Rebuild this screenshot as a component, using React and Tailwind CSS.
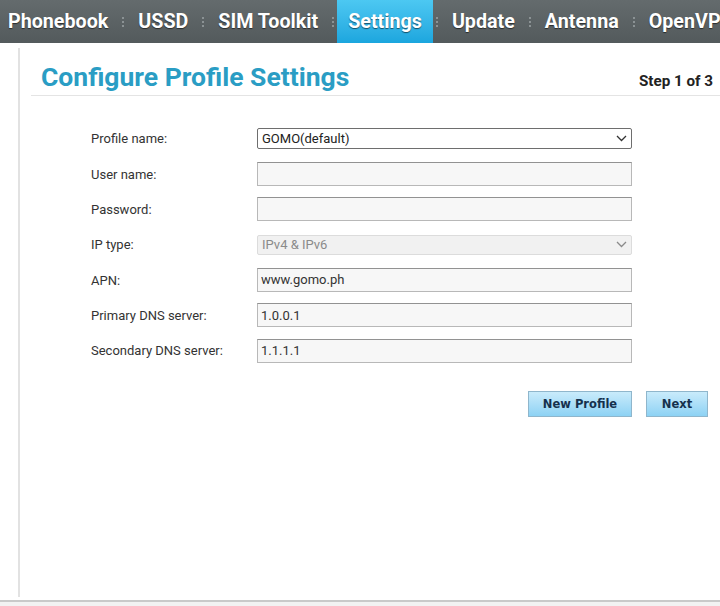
import React from "react";

const tabs = ["Phonebook", "USSD", "SIM Toolkit", "Settings", "Update", "Antenna", "OpenVPN"];

const Chevron = ({ color = "#333" }) => (
  <svg width="11" height="7" viewBox="0 0 11 7" className="shrink-0">
    <path d="M1 1l4.5 4.5L10 1" fill="none" stroke={color} strokeWidth="1.3" />
  </svg>
);

const Separator = () => (
  <div className="w-[8px] flex justify-center shrink-0">
    <div className="w-[2px] h-[10px] border-l-2 border-dotted border-[#8b9294]" />
  </div>
);

const TextField = ({ value }) => (
  <input
    readOnly
    value={value}
    className="w-[375px] h-[24px] bg-[#f7f7f7] border border-[#b8b8b8] border-t-[#929292] pl-[3px] text-[13px] text-[#333] outline-none"
  />
);

const rows = [
  { label: "Profile name:", kind: "select", value: "GOMO(default)" },
  { label: "User name:", kind: "input", value: "" },
  { label: "Password:", kind: "input", value: "" },
  { label: "IP type:", kind: "disabled", value: "IPv4 & IPv6" },
  { label: "APN:", kind: "input", value: "www.gomo.ph" },
  { label: "Primary DNS server:", kind: "input", value: "1.0.0.1" },
  { label: "Secondary DNS server:", kind: "input", value: "1.1.1.1" },
];

export default function App() {
  return (
    <div className="w-[720px] h-[606px] overflow-hidden bg-white font-['Roboto',sans-serif] flex flex-col">
      {/* Top tab bar */}
      <div className="h-[43px] shrink-0 flex items-stretch bg-gradient-to-b from-[#646b6d] to-[#535a5c] whitespace-nowrap">
        {tabs.map((tab, i) => (
          <React.Fragment key={tab}>
            {i > 0 && <div className="flex items-center"><Separator /></div>}
            <div
              className={
                "flex items-center text-[19.7px] font-bold text-white [text-shadow:0_1px_1px_rgba(0,0,0,0.55)] " +
                (i === 0 ? "pl-[8px] pr-[11px] " : "px-[11px] ") +
                (tab === "Settings" ? "bg-gradient-to-b from-[#4cc8f2] to-[#1ba6de]" : "")
              }
            >
              {tab}
            </div>
          </React.Fragment>
        ))}
      </div>

      {/* Main panel */}
      <div className="flex-1 flex flex-col pt-[5px]">
        <div className="flex-1 ml-[18px] border-l-2 border-[#e2e2e2] flex flex-col">
          {/* Header */}
          <div className="h-[48px] ml-[11px] pl-[10px] pr-[7px] border-b border-[#e4e4e4] flex items-end justify-between">
            <h1 className="text-[26.5px] leading-[30px] font-bold text-[#2a9dc4] mb-[3px]">Configure Profile Settings</h1>
            <span className="text-[15.2px] leading-[20px] font-bold text-[#222] mb-[4px]">Step 1 of 3</span>
          </div>

          {/* Form */}
          <div className="mt-[25px] pl-[71px] flex flex-col">
            {rows.map((row) => (
              <div key={row.label} className="h-[35.33px] flex items-center">
                <div className="w-[166px] text-[13px] text-[#333] pt-[1px]">{row.label}</div>
                {row.kind === "select" && (
                  <div className="w-[375px] h-[21px] bg-white border border-[#6e6e6e] rounded-[2px] flex items-center justify-between pl-[4px] pr-[4px] text-[13px] text-[#222]">
                    <span>{row.value}</span>
                    <Chevron />
                  </div>
                )}
                {row.kind === "disabled" && (
                  <div className="w-[375px] h-[20px] bg-[#f1f1f1] border border-[#dcdcdc] rounded-[2px] flex items-center justify-between pl-[4px] pr-[4px] text-[13px] text-[#8a8a8a]">
                    <span>{row.value}</span>
                    <Chevron color="#8a8a8a" />
                  </div>
                )}
                {row.kind === "input" && <TextField value={row.value} />}
              </div>
            ))}
          </div>

          {/* Buttons */}
          <div className="mt-[23px] flex justify-end gap-[14px] pr-[12px]">
            <button className="w-[104px] h-[26px] border border-[#8fb6cc] bg-gradient-to-b from-[#c9ebfb] to-[#8dd2f4] font-['DejaVu_Sans',sans-serif] text-[11.5px] font-bold text-[#15304d]">
              New Profile
            </button>
            <button className="w-[62px] h-[26px] border border-[#8fb6cc] bg-gradient-to-b from-[#c9ebfb] to-[#8dd2f4] font-['DejaVu_Sans',sans-serif] text-[11.5px] font-bold text-[#15304d]">
              Next
            </button>
          </div>
        </div>
        <div className="mt-[3px] h-[2px] bg-[#c9c9c9]" />
        <div className="h-[4px] bg-[#f2f2f2]" />
      </div>
    </div>
  );
}
